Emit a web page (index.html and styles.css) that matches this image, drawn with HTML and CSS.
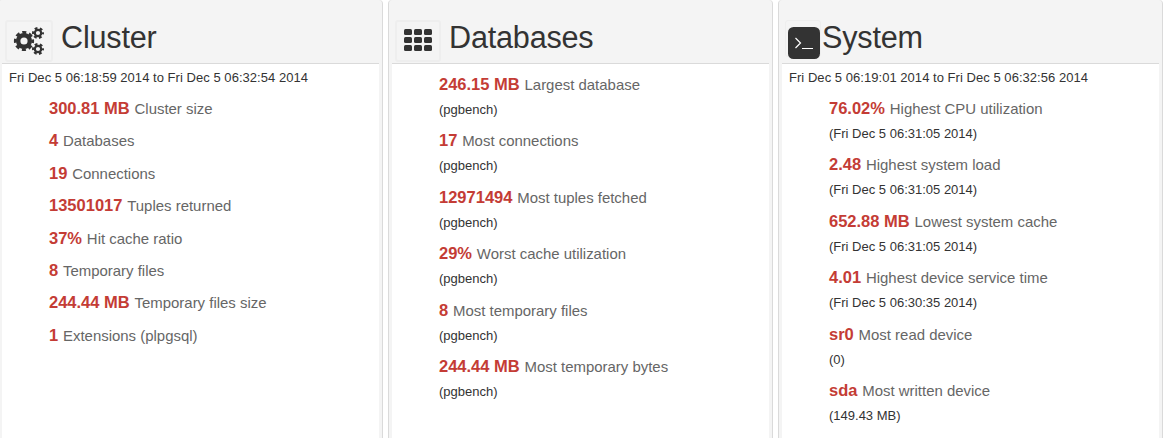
FILE: index.html
```html
<!DOCTYPE html>
<html lang="en">
<head>
<meta charset="utf-8">
<title>Report</title>
<link rel="stylesheet" href="styles.css">
</head>
<body>
<main class="panels">
  <section class="panel">
    <header class="head">
      <span class="icon"><svg width="32" height="30" viewBox="0 0 32 30">
        <g fill="none" stroke="#333">
          <circle cx="11" cy="15" r="5.8" stroke-width="4.4"/>
          <circle cx="11" cy="15" r="8.7" stroke-width="2.8" stroke-dasharray="4 2.833" stroke-dashoffset="2"/>
          <circle cx="25" cy="7" r="3.2" stroke-width="2.2"/>
          <circle cx="25" cy="7" r="4.8" stroke-width="2.4" stroke-dasharray="2.7 2.327" stroke-dashoffset="1.35"/>
          <circle cx="25" cy="23" r="3.2" stroke-width="2.2"/>
          <circle cx="25" cy="23" r="4.8" stroke-width="2.4" stroke-dasharray="2.7 2.327" stroke-dashoffset="1.35"/>
        </g>
      </svg></span>
      <h1>Cluster</h1>
    </header>
    <div class="body">
      <p class="date">Fri Dec 5 06:18:59 2014 to Fri Dec 5 06:32:54 2014</p>
      <ul>
        <li><b>300.81 MB</b> <span>Cluster size</span></li>
        <li><b>4</b> <span>Databases</span></li>
        <li><b>19</b> <span>Connections</span></li>
        <li><b>13501017</b> <span>Tuples returned</span></li>
        <li><b>37%</b> <span>Hit cache ratio</span></li>
        <li><b>8</b> <span>Temporary files</span></li>
        <li><b>244.44 MB</b> <span>Temporary files size</span></li>
        <li><b>1</b> <span>Extensions (plpgsql)</span></li>
      </ul>
    </div>
  </section>
  <section class="panel">
    <header class="head">
      <span class="icon grid"><svg width="28" height="22" viewBox="0 0 28 22" fill="#333">
        <rect x="0" y="0" width="8" height="6" rx="1.5"/><rect x="10" y="0" width="8" height="6" rx="1.5"/><rect x="20" y="0" width="8" height="6" rx="1.5"/>
        <rect x="0" y="8" width="8" height="6" rx="1.5"/><rect x="10" y="8" width="8" height="6" rx="1.5"/><rect x="20" y="8" width="8" height="6" rx="1.5"/>
        <rect x="0" y="16" width="8" height="6" rx="1.5"/><rect x="10" y="16" width="8" height="6" rx="1.5"/><rect x="20" y="16" width="8" height="6" rx="1.5"/>
      </svg></span>
      <h1 class="db">Databases</h1>
    </header>
    <div class="body">
      <ul>
        <li><b>246.15 MB</b> <span>Largest database</span><small>(pgbench)</small></li>
        <li><b>17</b> <span>Most connections</span><small>(pgbench)</small></li>
        <li><b>12971494</b> <span>Most tuples fetched</span><small>(pgbench)</small></li>
        <li><b>29%</b> <span>Worst cache utilization</span><small>(pgbench)</small></li>
        <li><b>8</b> <span>Most temporary files</span><small>(pgbench)</small></li>
        <li><b>244.44 MB</b> <span>Most temporary bytes</span><small>(pgbench)</small></li>
      </ul>
    </div>
  </section>
  <section class="panel">
    <header class="head">
      <span class="icon terminal"><svg width="32" height="32" viewBox="0 0 32 32">
        <rect width="32" height="32" rx="5.5" fill="#333"/>
        <path d="M7.5 11l5 5-5 5M14 21.5h11" fill="none" stroke="#fff" stroke-width="1.2"/>
      </svg></span>
      <h1 class="sys">System</h1>
    </header>
    <div class="body">
      <p class="date">Fri Dec 5 06:19:01 2014 to Fri Dec 5 06:32:56 2014</p>
      <ul>
        <li><b>76.02%</b> <span>Highest CPU utilization</span><small>(Fri Dec 5 06:31:05 2014)</small></li>
        <li><b>2.48</b> <span>Highest system load</span><small>(Fri Dec 5 06:31:05 2014)</small></li>
        <li><b>652.88 MB</b> <span>Lowest system cache</span><small>(Fri Dec 5 06:31:05 2014)</small></li>
        <li><b>4.01</b> <span>Highest device service time</span><small>(Fri Dec 5 06:30:35 2014)</small></li>
        <li><b>sr0</b> <span>Most read device</span><small>(0)</small></li>
        <li><b>sda</b> <span>Most written device</span><small>(149.43 MB)</small></li>
      </ul>
    </div>
  </section>
</main>
</body>
</html>
```
FILE: styles.css
```css
* { box-sizing: border-box; }
body {
  margin: 0;
  background: #fff;
  color: #333;
  font: 13px/24px "Liberation Sans", Arial, sans-serif;
}
.panels {
  display: flex;
  gap: 5px;
  margin-left: -2px;
  height: 438px;
}
.panel {
  flex: 0 0 385px;
  display: flex;
  flex-direction: column;
  padding: 0 3px;
  background: #f4f4f4;
  border: solid #dadada;
  border-width: 0 1px;
  border-radius: 4px 4px 0 0;
}
.head {
  display: flex;
  flex: none;
  align-items: flex-start;
  height: 64px;
  padding: 20px 0 0 3px;
  border-bottom: 1px solid #dadada;
}
.icon {
  display: flex;
  flex: none;
  align-items: center;
  justify-content: center;
  width: 48px;
  height: 42px;
  border: 2px solid #eee;
  border-radius: 3px;
}
.icon.grid {
  width: 46px;
  padding-bottom: 2px;
}
.icon.terminal {
  width: 36px;
  height: 37px;
  border-width: 1px;
  align-items: flex-end;
}
.terminal svg { margin: 0 -1px -3px 0; }
h1 {
  margin: -3px 0 0 8px;
  font-size: 30.6px;
  font-weight: 400;
  line-height: 40px;
  letter-spacing: -0.2px;
}
h1.db { margin-left: 8px; }
h1.sys { margin-left: 1px; }
.body {
  flex: 1;
  padding-top: 10px;
  background: #fff;
}
.date {
  margin: -7px 0 9px 7px;
  line-height: 22px;
  letter-spacing: 0.04px;
}
ul {
  margin: 0;
  padding: 0 0 0 47px;
  list-style: none;
}
li {
  margin-bottom: 8.4px;
}
b {
  color: #c43c35;
  font-size: 16.5px;
  line-height: 16px;
}
li span {
  margin-left: 1.2px;
  color: #666;
  font-size: 14.95px;
  line-height: 15px;
}
small {
  display: block;
  font-size: 13px;
  line-height: 24px;
}
```
